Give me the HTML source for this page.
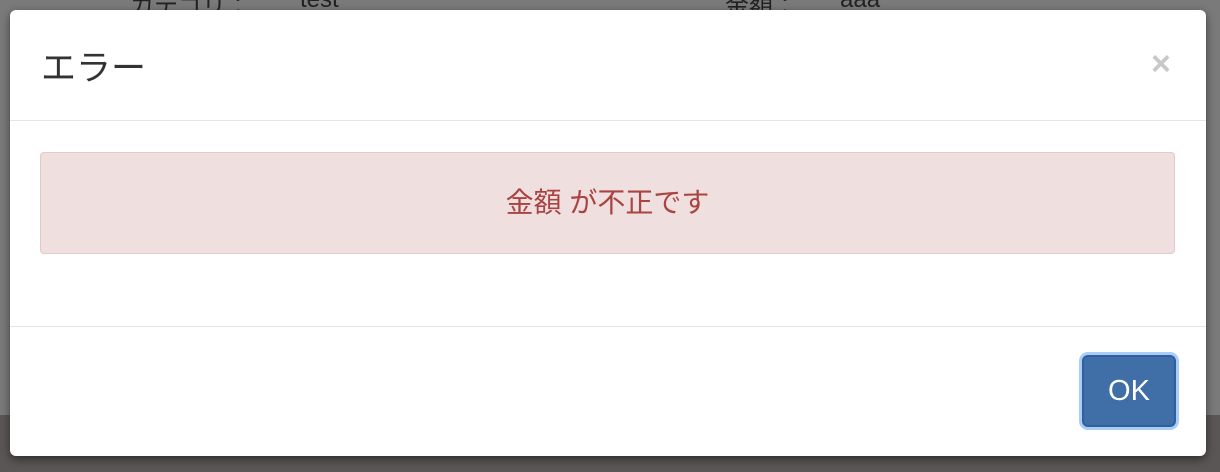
<!DOCTYPE html>
<html><head><meta charset="utf-8"><style>
body{margin:0;width:1220px;height:472px;background:#6f6f6f;position:relative;overflow:hidden;font-family:"Liberation Sans","Noto Sans CJK JP",sans-serif}
.bgtop{position:absolute;left:0;top:0;width:1220px;height:415px;background:#7a7a7a}
.bgbot{position:absolute;left:0;top:415px;width:1220px;height:57px;background:#5a5655}
.bgtxt{position:absolute;top:-14px;font-size:24px;color:#222}
.modal{position:absolute;left:10px;top:10px;width:1196px;height:446px;background:#fff;border-radius:6px;box-shadow:0 3px 9px rgba(0,0,0,.5)}
.title{position:absolute;left:31px;top:30px;font-size:35px;color:#333}
.close{position:absolute;left:1141px;top:35px;font-size:34px;font-weight:bold;color:#c8c8c8}
.hr1{position:absolute;left:0;top:110px;width:100%;height:1px;background:#e5e5e5}
.hr2{position:absolute;left:0;top:316px;width:100%;height:1px;background:#e5e5e5}
.alert{position:absolute;left:30px;top:142px;width:1133px;height:100px;background:#efdfdf;border:1px solid #e5c8cc;border-radius:4px;color:#a94442;font-size:28px;text-align:center;line-height:100px}
.ok{position:absolute;left:1072px;top:345px;width:94px;height:72px;box-sizing:border-box;background:#3f6fa6;border:2px solid #2e60a0;box-shadow:0 0 0 3px #a9cdf7;border-radius:6px;color:#fff;font-size:29px;text-align:center;line-height:68px}
</style></head><body>
<div class="bgtop"></div><div class="bgbot"></div>
<div class="bgtxt" style="left:130px">カテゴリ：</div>
<div class="bgtxt" style="left:300px">test</div>
<div class="bgtxt" style="left:725px">金額：</div>
<div class="bgtxt" style="left:840px">aaa</div>
<div class="modal">
<div class="title">エラー</div>
<div class="close">×</div>
<div class="hr1"></div>
<div class="alert">金額 が不正です</div>
<div class="hr2"></div>
<div class="ok">OK</div>
</div>
</body></html>
